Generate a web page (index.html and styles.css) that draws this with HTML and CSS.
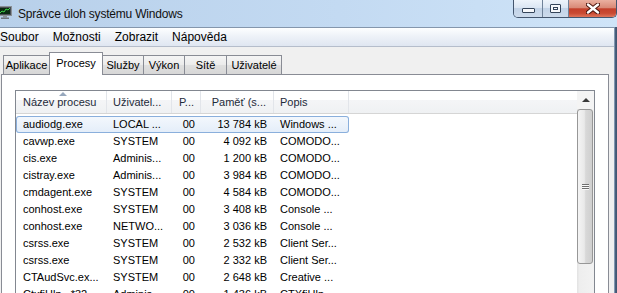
FILE: index.html
```html
<!DOCTYPE html>
<html lang="cs">
<head>
    <meta charset="UTF-8">
    <title>Správce úloh systému Windows</title>
    <link rel="stylesheet" href="styles.css">
</head>
<body>
    <div class="window">
        <div class="titlebar">
            <svg class="app-icon" viewBox="0 0 14 14">
                <rect x="0.5" y="1.5" width="13" height="9" fill="#4a4f55" stroke="#8a9096"/>
                <rect x="2" y="3" width="10" height="6" fill="#0b2a12"/>
                <polyline points="2,8 4,6 6,7 8,4 10,5 12,3" fill="none" stroke="#3fd34a" stroke-width="1"/>
                <rect x="5" y="11" width="4" height="1.5" fill="#8c9298"/>
                <rect x="3" y="12.5" width="8" height="1.5" fill="#6f757b"/>
            </svg>
            <span class="title">Správce úloh systému Windows</span>
            <div class="caption">
                <div class="cap-btn cap-min"><span class="min-glyph"></span></div>
                <div class="cap-btn cap-max"><span class="max-glyph"></span></div>
                <div class="cap-btn cap-close">
                    <svg class="close-glyph" viewBox="0 0 14 11">
                        <path d="M2 1.5 L12 9.5 M12 1.5 L2 9.5" stroke="#4a130b" stroke-width="4.4" stroke-linecap="round"/>
                        <path d="M2 1.5 L12 9.5 M12 1.5 L2 9.5" stroke="#fff" stroke-width="2.4" stroke-linecap="round"/>
                    </svg>
                </div>
            </div>
        </div>

        <div class="frame">
            <div class="client">
                <div class="menubar">
                    <span class="menu-item">Soubor</span>
                    <span class="menu-item">Možnosti</span>
                    <span class="menu-item">Zobrazit</span>
                    <span class="menu-item">Nápověda</span>
                </div>

                <div class="content">
                    <div class="tabs">
                        <div class="tab tab-apps">Aplikace</div>
                        <div class="tab tab-procs active">Procesy</div>
                        <div class="tab tab-svc">Služby</div>
                        <div class="tab tab-perf">Výkon</div>
                        <div class="tab tab-net">Sítě</div>
                        <div class="tab tab-users">Uživatelé</div>
                    </div>

                    <div class="panel">
                        <div class="listview">
                            <div class="lv-main">
                                <div class="lv-header">
                                    <div class="hcell col-name sorted">Název procesu</div>
                                    <div class="hcell col-user">Uživatel...</div>
                                    <div class="hcell col-cpu num">P...</div>
                                    <div class="hcell col-mem num">Paměť (s...</div>
                                    <div class="hcell col-desc">Popis</div>
                                    <div class="hcell col-fill"></div>
                                </div>
                                <div class="lv-rows">
                                    <div class="row selected">
                                        <div class="cell col-name">audiodg.exe</div>
                                        <div class="cell col-user">LOCAL ...</div>
                                        <div class="cell col-cpu num">00</div>
                                        <div class="cell col-mem num">13 784 kB</div>
                                        <div class="cell col-desc">Windows ...</div>
                                    </div>
                                    <div class="row">
                                        <div class="cell col-name">cavwp.exe</div>
                                        <div class="cell col-user">SYSTEM</div>
                                        <div class="cell col-cpu num">00</div>
                                        <div class="cell col-mem num">4 092 kB</div>
                                        <div class="cell col-desc">COMODO...</div>
                                    </div>
                                    <div class="row">
                                        <div class="cell col-name">cis.exe</div>
                                        <div class="cell col-user">Adminis...</div>
                                        <div class="cell col-cpu num">00</div>
                                        <div class="cell col-mem num">1 200 kB</div>
                                        <div class="cell col-desc">COMODO...</div>
                                    </div>
                                    <div class="row">
                                        <div class="cell col-name">cistray.exe</div>
                                        <div class="cell col-user">Adminis...</div>
                                        <div class="cell col-cpu num">00</div>
                                        <div class="cell col-mem num">3 984 kB</div>
                                        <div class="cell col-desc">COMODO...</div>
                                    </div>
                                    <div class="row">
                                        <div class="cell col-name">cmdagent.exe</div>
                                        <div class="cell col-user">SYSTEM</div>
                                        <div class="cell col-cpu num">00</div>
                                        <div class="cell col-mem num">4 584 kB</div>
                                        <div class="cell col-desc">COMODO...</div>
                                    </div>
                                    <div class="row">
                                        <div class="cell col-name">conhost.exe</div>
                                        <div class="cell col-user">SYSTEM</div>
                                        <div class="cell col-cpu num">00</div>
                                        <div class="cell col-mem num">3 408 kB</div>
                                        <div class="cell col-desc">Console ...</div>
                                    </div>
                                    <div class="row">
                                        <div class="cell col-name">conhost.exe</div>
                                        <div class="cell col-user">NETWO...</div>
                                        <div class="cell col-cpu num">00</div>
                                        <div class="cell col-mem num">3 036 kB</div>
                                        <div class="cell col-desc">Console ...</div>
                                    </div>
                                    <div class="row">
                                        <div class="cell col-name">csrss.exe</div>
                                        <div class="cell col-user">SYSTEM</div>
                                        <div class="cell col-cpu num">00</div>
                                        <div class="cell col-mem num">2 532 kB</div>
                                        <div class="cell col-desc">Client Ser...</div>
                                    </div>
                                    <div class="row">
                                        <div class="cell col-name">csrss.exe</div>
                                        <div class="cell col-user">SYSTEM</div>
                                        <div class="cell col-cpu num">00</div>
                                        <div class="cell col-mem num">2 332 kB</div>
                                        <div class="cell col-desc">Client Ser...</div>
                                    </div>
                                    <div class="row">
                                        <div class="cell col-name">CTAudSvc.ex...</div>
                                        <div class="cell col-user">SYSTEM</div>
                                        <div class="cell col-cpu num">00</div>
                                        <div class="cell col-mem num">2 648 kB</div>
                                        <div class="cell col-desc">Creative ...</div>
                                    </div>
                                    <div class="row">
                                        <div class="cell col-name">CtxfiHlp...*32</div>
                                        <div class="cell col-user">Adminis...</div>
                                        <div class="cell col-cpu num">00</div>
                                        <div class="cell col-mem num">1 436 kB</div>
                                        <div class="cell col-desc">CTXfiHlp...</div>
                                    </div>
                                </div>
                            </div>
                            <div class="scrollbar">
                                <div class="sb-up"><span class="sb-arrow"></span></div>
                                <div class="sb-thumb"><span class="grip"></span></div>
                            </div>
                        </div>
                    </div>
                </div>
            </div>
            <div class="frame-edge"></div>
        </div>
    </div>
</body>
</html>
```

FILE: styles.css
```css
* { box-sizing: border-box; }
html, body { margin: 0; }
body {
    width: 617px;
    height: 293px;
    overflow: hidden;
    font-family: "Liberation Sans", Arial, sans-serif;
    background-color: #f0f0f0;
    color: #000;
}
.window { width: 617px; height: 293px; display: flex; flex-direction: column; }

/* title bar */
.titlebar {
    height: 27px;
    flex: none;
    display: flex;
    align-items: flex-start;
    background: linear-gradient(to right, #b8d0ea, #c3daf2 55%, #cfe4f8);
}
.app-icon { width: 14px; height: 14px; margin: 5px 6px 0 -2px; flex: none; }
.title { font-size: 12px; line-height: 16px; margin-top: 6px; color: #111; white-space: nowrap; letter-spacing: -0.2px; }
.caption {
    margin-left: auto;
    display: flex;
    height: 18px;
    border: 1px solid #44566e;
    border-top: none;
    border-radius: 0 0 5px 5px;
    overflow: hidden;
}
.cap-btn { display: flex; align-items: center; justify-content: center; }
.cap-min, .cap-max {
    background: linear-gradient(#eef4fb, #dbe6f3 45%, #c2d3e7 50%, #cddbec);
    border-right: 1px solid #6f8299;
}
.cap-min { width: 29px; align-items: flex-end; padding-bottom: 4px; }
.cap-max { width: 26px; }
.cap-close {
    width: 47px;
    background: linear-gradient(#eab0a0, #d98a77 45%, #c3402b 52%, #c94a33 78%, #e0765c);
}
.min-glyph {
    width: 13px; height: 5px;
    background: #f6f8fb;
    border: 1px solid #35455a;
    border-radius: 1px;
}
.max-glyph {
    width: 11px; height: 9px;
    border: 1px solid #35455a;
    background: #f6f8fb;
    box-shadow: inset 0 0 0 2px #f6f8fb, inset 0 0 0 3px #35455a;
    border-radius: 1px;
}
.close-glyph { width: 14px; height: 11px; }

/* window body */
.frame { flex: 1; display: flex; min-height: 0; }
.client {
    width: 614px;
    flex: none;
    display: flex;
    flex-direction: column;
    border-top: 1px solid #8496ac;
}
.frame-edge { flex: 1; background: linear-gradient(to right, #a9bdd3, #4b6280 40%, #3d526c); }

.menubar {
    height: 19px;
    flex: none;
    display: flex;
    background: linear-gradient(#fdfeff, #eef2f8 45%, #dfe6f1);
    border-bottom: 1px solid #b5bdcb;
    font-size: 12px;
    line-height: 18px;
}
.menu-item { padding: 0 7px; }
.menu-item:first-child { padding-left: 0; }

.content { flex: 1; display: flex; flex-direction: column; padding: 0 5px 0 1px; min-height: 0; }

/* tabs */
.tabs { height: 27px; flex: none; display: flex; align-items: flex-start; padding-left: 2px; }
.tab {
    margin-top: 8px;
    height: 19px;
    margin-left: -1px;
    border: 1px solid #898c95;
    border-bottom: none;
    background: linear-gradient(#f5f5f5, #ebebeb 50%, #dfdfdf 52%, #d7d7d7);
    font-size: 11px;
    line-height: 18px;
    text-align: center;
    white-space: nowrap;
}
.tab:first-child { margin-left: 0; }
.tab.active {
    position: relative;
    z-index: 1;
    margin-top: 5px;
    height: 23px;
    background: #fff;
    line-height: 20px;
}
.tab-apps { width: 47px; }
.tab-procs { width: 54px; }
.tab-svc { width: 42px; }
.tab-perf { width: 42px; }
.tab-net { width: 43px; }
.tab-users { width: 56px; }

.panel {
    flex: 1;
    min-height: 0;
    background: #fff;
    border: 1px solid #898c95;
    border-bottom: none;
    padding: 15px 13px 0 13px;
    display: flex;
    flex-direction: column;
}

/* list view */
.listview {
    flex: 1;
    display: flex;
    border: 1px solid #828790;
    border-bottom: none;
    min-height: 0;
    overflow: hidden;
}
.lv-main { width: 561px; flex: none; }
.lv-header {
    display: flex;
    height: 23px;
    border-bottom: 1px solid #d5d5d5;
    background: linear-gradient(#ffffff, #ffffff 42%, #f4f5f7 42%, #eff1f3);
    color: #1e2b3a;
    font-size: 11px;
}
.hcell {
    height: 22px;
    padding-top: 5px;
    border-right: 1px solid #e2e5ea;
    white-space: nowrap;
    overflow: hidden;
}
.hcell.sorted { position: relative; }
.hcell.sorted::before {
    content: "";
    position: absolute;
    left: 43px;
    top: 1px;
    border-left: 4px solid transparent;
    border-right: 4px solid transparent;
    border-bottom: 4px solid #97a8bd;
}
.col-fill { flex: 1; border-right: none; }

.col-name { width: 91px; padding-left: 7px; }
.col-user { width: 65px; padding-left: 6px; }
.col-cpu { width: 29px; }
.col-mem { width: 73px; }
.col-desc { width: 75px; padding-left: 6px; }
.num { text-align: right; padding-right: 6px; }
.col-mem.num { padding-right: 7px; }

.lv-rows { padding-top: 2px; }
.row { display: flex; width: 333px; height: 17px; font-size: 11px; line-height: 17px; }
.cell { white-space: nowrap; overflow: hidden; }
.row.selected {
    background: linear-gradient(#f4f8fd, #e3edf9);
    box-shadow: inset 0 0 0 1px #8aafdc;
    border-radius: 3px;
}

/* scrollbar */
.scrollbar {
    width: 17px;
    flex: none;
    display: flex;
    flex-direction: column;
    background: linear-gradient(to right, #e2e2e2, #eeeeee 15%, #f2f2f2);
}
.sb-up { height: 18px; display: flex; align-items: center; justify-content: center; background: #f4f4f4; }
.sb-arrow {
    width: 0; height: 0;
    border-left: 4px solid transparent;
    border-right: 4px solid transparent;
    border-bottom: 4px solid #3a3a3a;
}
.sb-thumb {
    width: 16px;
    height: 155px;
    border: 1px solid #979797;
    border-radius: 3px;
    background: linear-gradient(to right, #f4f4f4, #e9e9e9 45%, #d8d8d8 55%, #cfcfcf);
    display: flex;
    align-items: center;
    justify-content: center;
}
.grip {
    width: 7px; height: 6px;
    background: repeating-linear-gradient(#6f6f6f 0, #6f6f6f 1px, #fafafa 1px, #fafafa 2px);
}
```
